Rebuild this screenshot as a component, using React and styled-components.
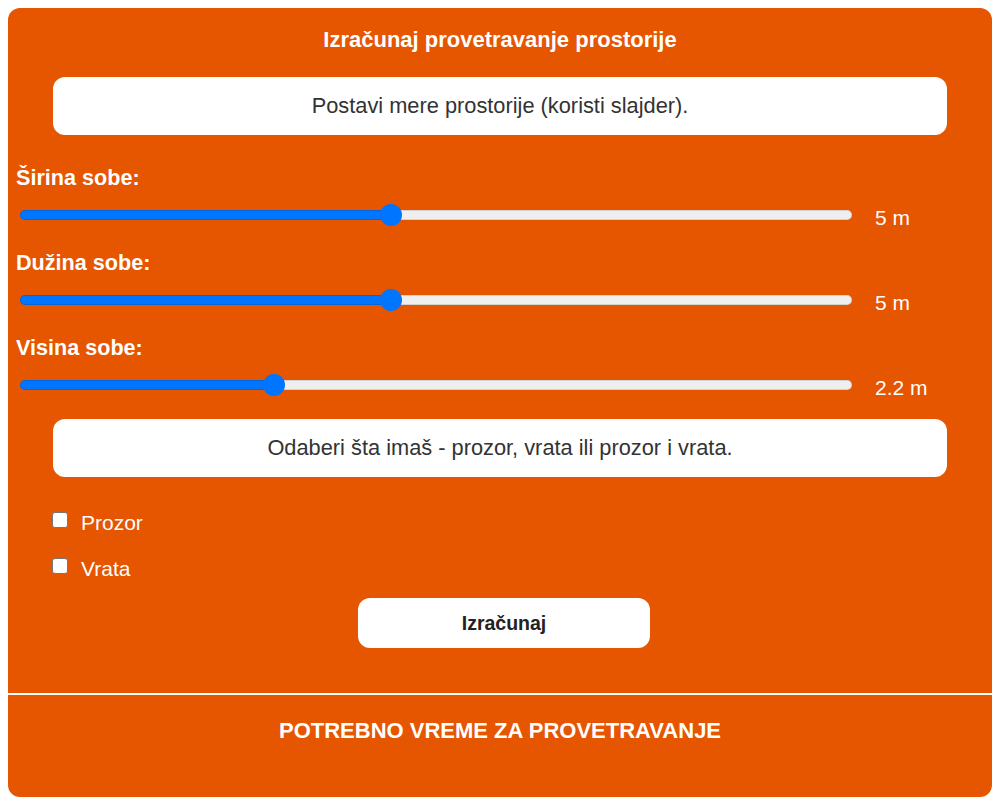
import React, { useState } from 'react';
import styled, { createGlobalStyle } from 'styled-components';

const GlobalStyle = createGlobalStyle`
  body {
    margin: 8px;
    background: #ffffff;
    font-family: "Liberation Sans", Arial, sans-serif;
  }
`;

const Card = styled.div`
  background-color: #e65500;
  border-radius: 12px;
  padding: 20px 8px 0;
  color: #ffffff;
  display: flex;
  flex-direction: column;
`;

const Title = styled.div`
  font-size: 22px;
  font-weight: 700;
  line-height: 24px;
  text-align: center;
`;

const InfoBox = styled.div`
  margin: ${(p) => p.$top}px 37px 0;
  height: 58px;
  background: #ffffff;
  border-radius: 12px;
  color: #333333;
  font-size: 21.8px;
  display: flex;
  align-items: center;
  justify-content: center;
`;

const Label = styled.div`
  font-size: 21.6px;
  font-weight: 700;
  line-height: 24px;
  margin-top: ${(p) => p.$top}px;
`;

const SliderRow = styled.div`
  display: flex;
  align-items: center;
  height: 30px;
  margin-top: 10px;
  gap: 23px;
`;

const Range = styled.input.attrs({ type: 'range' })`
  -webkit-appearance: none;
  appearance: none;
  width: 832px;
  height: 22px;
  margin: 0 0 0 4px;
  background: transparent;
  cursor: pointer;

  &::-webkit-slider-runnable-track {
    height: 10px;
    border-radius: 5px;
    background: ${(p) => `linear-gradient(to right, #0075ff ${p.$fill}, #efefef ${p.$fill})`};
    box-shadow: inset 0 0 0 1px rgba(0, 0, 0, 0.12);
  }
  &::-webkit-slider-thumb {
    -webkit-appearance: none;
    width: 22px;
    height: 22px;
    border-radius: 50%;
    background: #0075ff;
    margin-top: -6px;
    border: none;
  }
  &:focus {
    outline: none;
  }
`;

const Value = styled.span`
  font-size: 21px;
  line-height: 24px;
  margin-top: 5px;
`;

const Checks = styled.div`
  display: flex;
  flex-direction: column;
  gap: 22px;
  margin: 34px 0 0 36px;
`;

const CheckRow = styled.label`
  display: flex;
  align-items: center;
  gap: 13px;
  font-size: 21px;
  line-height: 24px;
  cursor: pointer;
`;

const Box = styled.input.attrs({ type: 'checkbox' })`
  -webkit-appearance: none;
  appearance: none;
  width: 16px;
  height: 16px;
  margin: -6px 0 0;
  background: #ffffff;
  border: 1px solid #767676;
  border-radius: 3px;
  &:checked {
    background: #0075ff;
    border-color: #0075ff;
  }
`;

const Button = styled.button`
  align-self: center;
  margin: 17px 0 0 8px;
  width: 292px;
  height: 50px;
  border: none;
  border-radius: 12px;
  background: #ffffff;
  color: #222222;
  font-family: inherit;
  font-size: 19.5px;
  font-weight: 700;
  cursor: pointer;
`;

const Divider = styled.hr`
  margin: 45px -8px 0;
  border: none;
  height: 2px;
  background: #ffffff;
`;

const Result = styled.div`
  font-size: 22px;
  font-weight: 700;
  line-height: 24px;
  text-align: center;
  margin: 24px 0 54px;
`;

const fillOf = (value, min, max) => {
  const frac = (value - min) / (max - min);
  return `${((11 + frac * 810) / 832) * 100}%`;
};

const sliders = [
  { key: 'w', label: 'Širina sobe:', min: 1, max: 10, step: 0.1, top: 31 },
  { key: 'l', label: 'Dužina sobe:', min: 1, max: 10, step: 0.1, top: 21 },
  { key: 'h', label: 'Visina sobe:', min: 1, max: 5, step: 0.1, top: 21 },
];

const App = () => {
  const [vals, setVals] = useState({ w: 5, l: 5, h: 2.2 });

  return (
    <>
      <GlobalStyle />
      <Card>
        <Title>Izračunaj provetravanje prostorije</Title>
        <InfoBox $top={25}>Postavi mere prostorije (koristi slajder).</InfoBox>
        {sliders.map((s) => (
          <React.Fragment key={s.key}>
            <Label $top={s.top}>{s.label}</Label>
            <SliderRow>
              <Range
                min={s.min}
                max={s.max}
                step={s.step}
                value={vals[s.key]}
                $fill={fillOf(vals[s.key], s.min, s.max)}
                onChange={(e) => setVals({ ...vals, [s.key]: Number(e.target.value) })}
              />
              <Value>{vals[s.key]} m</Value>
            </SliderRow>
          </React.Fragment>
        ))}
        <InfoBox $top={19}>Odaberi šta imaš - prozor, vrata ili prozor i vrata.</InfoBox>
        <Checks>
          <CheckRow>
            <Box />
            Prozor
          </CheckRow>
          <CheckRow>
            <Box />
            Vrata
          </CheckRow>
        </Checks>
        <Button>Izračunaj</Button>
        <Divider />
        <Result>POTREBNO VREME ZA PROVETRAVANJE</Result>
      </Card>
    </>
  );
};

export default App;
